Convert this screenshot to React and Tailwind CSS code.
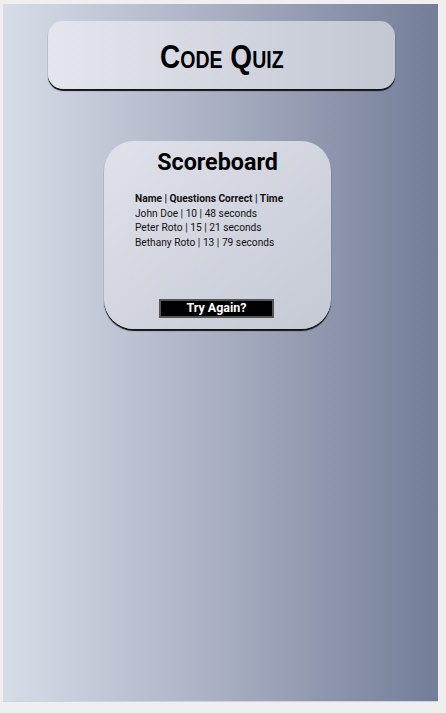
import React from "react";

const scores = [
  { name: "John Doe", correct: 10, time: 48 },
  { name: "Peter Roto", correct: 15, time: 21 },
  { name: "Bethany Roto", correct: 13, time: 79 },
];

const App = () => {
  return (
    <div className="w-[446px] h-[713px] bg-[#efefef] pt-[4px] pl-[3px] pr-[8px] pb-[11px]">
      <div className="h-full flex flex-col bg-gradient-to-r from-[#d7dde7] via-[#a9afc2] to-[#737d98] border-b border-[#cfd3dd]">
        <div className="mt-[17px] ml-[45px] w-[347px] h-[68px] rounded-[15px] bg-gradient-to-r from-[#e3e6ee] to-[#c3c7d2] shadow-[0_2px_1px_#111] flex items-center justify-center">
          <h1
            className="text-[33px] leading-none font-bold text-black [font-variant:small-caps] scale-x-[0.85] mt-[2px]"
            style={{ fontFamily: '"Liberation Sans", Arial, sans-serif' }}
          >
            Code Quiz
          </h1>
        </div>

        <div
          className="mt-[52px] ml-[101px] w-[227px] h-[188px] rounded-[30px] bg-gradient-to-br from-[#dfe2ea] to-[#c5c9d4] shadow-[0_2px_1px_#111] flex flex-col items-center"
          style={{ fontFamily: "Roboto, 'Liberation Sans', sans-serif" }}
        >
          <h2 className="mt-[5px] text-[23.3px] leading-[32px] font-bold text-black">Scoreboard</h2>
          <div className="self-start ml-[31px] mt-[14px] text-[10.2px] leading-[14.7px] text-[#111]">
            <p className="font-bold">Name | Questions Correct | Time</p>
            {scores.map((s) => (
              <p key={s.name}>
                {s.name} | {s.correct} | {s.time} seconds
              </p>
            ))}
          </div>
          <button className="mt-auto mb-[11px] ml-[-2px] w-[115px] h-[19px] bg-black border-2 border-[#555] text-white text-[12.5px] font-bold leading-none">
            Try Again?
          </button>
        </div>
      </div>
    </div>
  );
};

export default App;
